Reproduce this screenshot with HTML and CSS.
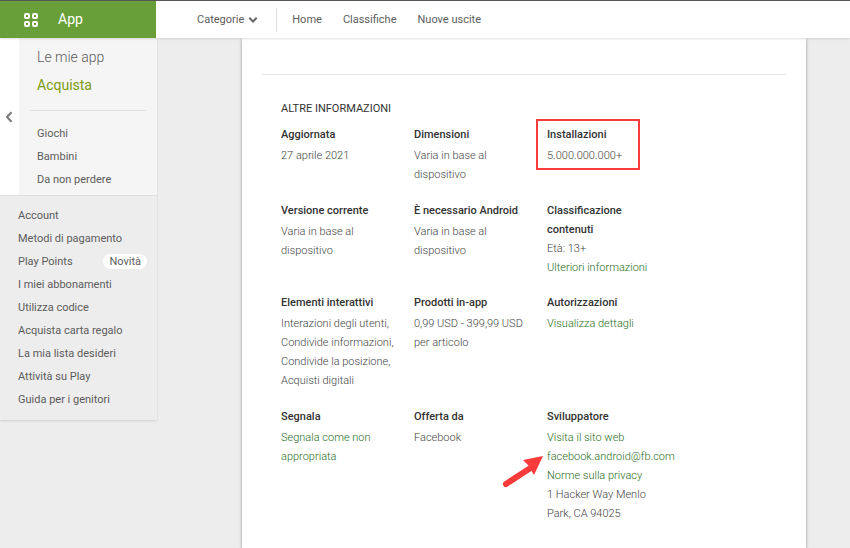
FILE: index.html
```html
<!DOCTYPE html>
<html lang="it">
<head>
<meta charset="utf-8">
<meta name="viewport" content="width=device-width, initial-scale=1">
<title>App</title>
<link rel="stylesheet" href="styles.css">
</head>
<body>
<header class="topbar">
  <a class="brand" href="#">
    <svg class="brand-icon" viewBox="0 0 14 14" aria-hidden="true">
      <rect x="1" y="1" width="4" height="4" rx="1"/>
      <rect x="9" y="1" width="4" height="4" rx="1"/>
      <rect x="1" y="9" width="4" height="4" rx="1"/>
      <rect x="9" y="9" width="4" height="4" rx="1"/>
    </svg>
    <span>App</span>
  </a>
  <nav class="topnav">
    <button class="categories" type="button">Categorie
      <svg class="chevron" viewBox="0 0 10 8" aria-hidden="true"><path d="M1.3 1.8 5 5.5 8.7 1.8"/></svg>
    </button>
    <a href="#">Home</a>
    <a href="#">Classifiche</a>
    <a href="#">Nuove uscite</a>
  </nav>
</header>
<div class="page">
  <aside class="sidebar">
    <div class="store">
      <button class="back" type="button" aria-label="Indietro">
        <svg viewBox="0 0 8 12" aria-hidden="true"><path d="M6.5 1.2 2 6l4.500 4.800"/></svg>
      </button>
      <nav class="store-nav">
        <a class="primary" href="#">Le mie app</a>
        <a class="primary current" href="#">Acquista</a>
        <hr>
        <a href="#">Giochi</a>
        <a href="#">Bambini</a>
        <a href="#">Da non perdere</a>
      </nav>
    </div>
    <nav class="account-nav">
      <a href="#">Account</a>
      <a href="#">Metodi di pagamento</a>
      <a href="#">Play Points <span class="pill">Novità</span></a>
      <a href="#">I miei abbonamenti</a>
      <a href="#">Utilizza codice</a>
      <a href="#">Acquista carta regalo</a>
      <a href="#">La mia lista desideri</a>
      <a href="#">Attività su Play</a>
      <a href="#">Guida per i genitori</a>
    </nav>
  </aside>
  <main class="card">
    <section class="details">
      <h2>Altre informazioni</h2>
      <div class="grid">
        <div class="item"><h3>Aggiornata</h3><p>27 aprile 2021</p></div>
        <div class="item"><h3>Dimensioni</h3><p>Varia in base al dispositivo</p></div>
        <div class="item"><h3>Installazioni</h3><p>5.000.000.000+</p><span class="highlight"></span></div>
        <div class="item"><h3>Versione corrente</h3><p>Varia in base al dispositivo</p></div>
        <div class="item"><h3>È necessario Android</h3><p>Varia in base al dispositivo</p></div>
        <div class="item compact"><h3>Classificazione contenuti</h3><p>Età: 13+<br><a href="#">Ulteriori informazioni</a></p></div>
        <div class="item"><h3>Elementi interattivi</h3><p>Interazioni degli utenti, Condivide informazioni, Condivide la posizione, Acquisti digitali</p></div>
        <div class="item"><h3>Prodotti in-app</h3><p>0,99 USD - 399,99 USD per articolo</p></div>
        <div class="item"><h3>Autorizzazioni</h3><p><a href="#">Visualizza dettagli</a></p></div>
        <div class="item"><h3>Segnala</h3><p><a href="#">Segnala come non appropriata</a></p></div>
        <div class="item"><h3>Offerta da</h3><p>Facebook</p></div>
        <div class="item"><h3>Sviluppatore</h3>
          <p><a href="#">Visita il sito web</a><br><a href="#">facebook.android@fb.com</a><br><a href="#">Norme sulla privacy</a><br>1 Hacker Way Menlo Park, CA 94025</p>
          <svg class="arrow" viewBox="0 0 42 34" aria-hidden="true">
            <path class="shaft" d="M4 29 30 12"/>
            <path class="head" d="M41 1 21 5 26 10 32 20Z"/>
          </svg>
        </div>
      </div>
    </section>
  </main>
</div>
</body>
</html>
```
FILE: styles.css
```css
* { box-sizing: border-box; }
body {
  margin: 0;
  min-height: 100vh;
  display: flex;
  flex-direction: column;
  background: #ededed;
  color: #5c5c5c;
  font: 11px/19px Roboto, sans-serif;
}
a { color: inherit; text-decoration: none; }
button { border: 0; padding: 0; background: none; color: inherit; font: inherit; }
h2, h3, p { margin: 0; }
svg { display: block; }

.topbar {
  position: relative;
  display: flex;
  height: 38px;
  border-top: 1px solid #555;
  background: #fff;
  box-shadow: 0 1px 2px rgba(0, 0, 0, .12);
}
.brand {
  display: flex;
  align-items: center;
  gap: 20px;
  width: 156px;
  padding-left: 24px;
  background: #689f38;
  color: #fff;
  font-size: 14px;
}
.brand-icon { width: 14px; height: 14px; fill: none; stroke: #fff; stroke-width: 2; }
.topnav { display: flex; align-items: center; gap: 21px; padding-left: 41px; }
.categories {
  display: flex;
  align-items: center;
  gap: 4px;
  height: 24px;
  padding-right: 18px;
  margin-right: -6px;
  border-right: 1px solid #e0e0e0;
}
.chevron { width: 10px; height: 8px; fill: none; stroke: #666; stroke-width: 2; }

.page { flex: 1; display: flex; align-items: stretch; }
.sidebar {
  width: 157px;
  flex-shrink: 0;
  align-self: flex-start;
  box-shadow: 0 1px 2px rgba(0, 0, 0, .12);
}
.store { display: flex; background: #fff; }
.back { width: 19px; padding-left: 5px; }
.back svg { width: 8px; height: 12px; fill: none; stroke: #777; stroke-width: 2; }
.store-nav { flex: 1; padding: 6px 11px 4px; background: #f5f5f5; }
.store-nav a { display: block; padding: 2px 7px; }
.store-nav .primary { padding: 4px 7px 5px; font-size: 14px; font-weight: 300; }
.store-nav .current { color: #7c9a13; font-weight: 400; }
.store-nav hr { height: 1px; margin: 10px 0 11px; border: 0; background: #e0e0e0; }
.account-nav {
  padding: 8px 10px 9px 18px;
  border-top: 1px solid #e0e0e0;
  background: #ededed;
}
.account-nav a { display: flex; justify-content: space-between; align-items: center; height: 23px; }
.pill { padding: 0 6px; border-radius: 8px; background: #fff; line-height: 15px; }

.card {
  flex: 1;
  margin: 0 44px 0 85px;
  padding: 36px 20px 16px;
  background: #fff;
  box-shadow: 0 1px 3px rgba(0, 0, 0, .4);
}
.details { padding: 24px 19px 0; border-top: 1px solid #e6e6e6; }
.details h2 { color: #333; font-size: 11px; font-weight: 400; text-transform: uppercase; }
.grid {
  display: grid;
  grid-template-columns: repeat(3, 133px);
  row-gap: 16px;
  margin-top: 7px;
  color: #444;
  font-weight: 300;
}
.item { position: relative; padding: 0 16px 1px 0; }
.item h3 { margin: 0 0 2px; color: #333; font-size: 11px; font-weight: 500; }
.item.compact { padding-bottom: 0; }
.item.compact h3 { margin: 0; }
.item a { color: #2a6e1c; }
.highlight { position: absolute; left: -11px; top: -6px; width: 104px; height: 51px; border: 2px solid #f93b3b; }
.arrow { position: absolute; left: -45px; top: 48px; width: 42px; height: 34px; }
.shaft { fill: none; stroke: #f93b3b; stroke-width: 6; stroke-linecap: round; }
.head { fill: #f93b3b; }
```
